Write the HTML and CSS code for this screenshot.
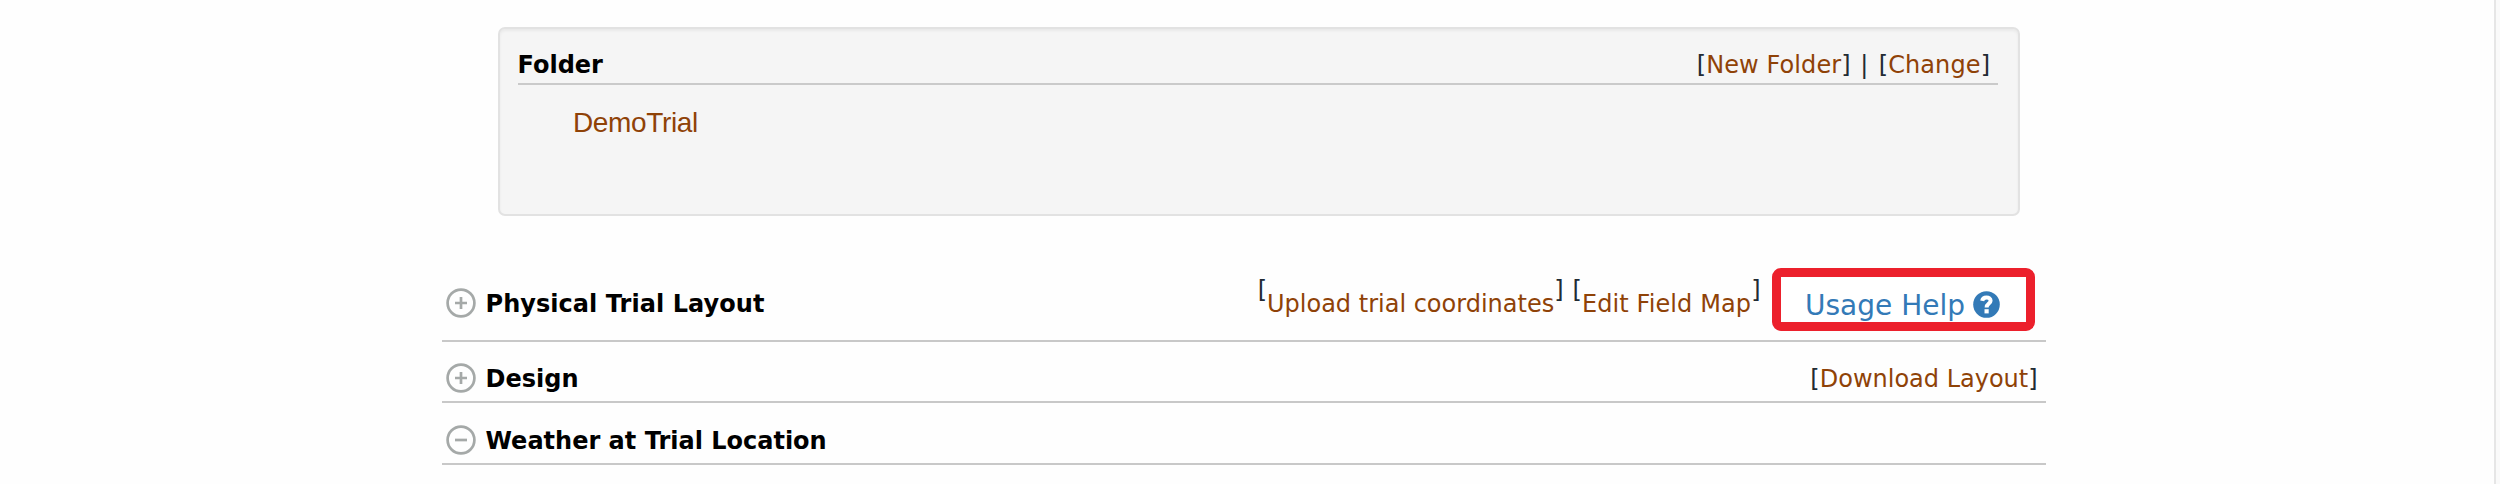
FILE: index.html
```
<!DOCTYPE html>
<html lang="en">
<head>
<meta charset="utf-8">
<title>DemoTrial</title>
<link rel="stylesheet" href="styles.css">
</head>
<body>
<main class="page">
  <section class="folder">
    <header class="folder-head">
      <h2 class="title">Folder</h2>
      <div class="folder-actions"><span class="action">[<a>New Folder</a>]</span><span>|</span><span class="action">[<a>Change</a>]</span></div>
    </header>
    <a class="folder-name">DemoTrial</a>
  </section>

  <section class="row row-layout">
    <svg class="toggle" viewBox="0 0 30 30"><circle cx="15" cy="15" r="13.4"/><path d="M9 15h12M15 9v12"/></svg>
    <h2 class="title title-wide">Physical Trial Layout</h2>
    <div class="layout-actions">
      <span class="raised"><sup>[</sup><a>Upload trial coordinates</a><sup>]</sup></span>
      <span class="raised raised-wide"><sup>[</sup><a>Edit Field Map</a><sup>]</sup></span>
    </div>
    <div class="help">
      <span>Usage Help</span>
      <svg class="help-icon" viewBox="0 0 27 27"><circle cx="13.5" cy="13.5" r="13.3"/><path class="mark" d="M9.2 9.8C9.6 7.5 11.2 6.6 13.5 6.6c2.4 0 4.1 1.2 4.1 3.1 0 2.9-4 2.7-4 6.7"/><path class="dot" d="M11.5 18.2h4.2v4.2h-4.2z"/></svg>
    </div>
  </section>

  <section class="row row-design">
    <svg class="toggle" viewBox="0 0 30 30"><circle cx="15" cy="15" r="13.4"/><path d="M9 15h12M15 9v12"/></svg>
    <h2 class="title">Design</h2>
    <div class="download">[<a>Download Layout</a>]</div>
  </section>

  <section class="row row-weather">
    <svg class="toggle" viewBox="0 0 30 30"><circle cx="15" cy="15" r="13.4"/><path d="M9 15h12"/></svg>
    <h2 class="title">Weather at Trial Location</h2>
  </section>
</main>
<aside class="edge"></aside>
</body>
</html>
```
FILE: styles.css
```
* { box-sizing: border-box; }
body {
  margin: 0;
  height: 484px;
  overflow: hidden;
  display: flex;
  background: #fefefe;
  color: #222b33;
  font: 24px/30px Verdana, "DejaVu Sans", sans-serif;
}
a { color: #8f4207; }
.page { flex: 1; padding: 27px 448px 0 442px; }
.edge { width: 6px; border-left: 2px solid #e6e6e6; background: #fafafa; }
.title { margin: 0; font-size: 24px; font-weight: bold; line-height: 30px; color: #000; white-space: nowrap; }
.title-wide { letter-spacing: 0.05px; }

.folder {
  height: 189px;
  margin: 0 26px 0 56px;
  padding: 21px 20px 0 17.5px;
  border: 2px solid #e2e2e2;
  border-radius: 7px;
  background: #f5f5f5;
  box-shadow: inset 0 2px 3px rgba(0, 0, 0, 0.05);
}
.folder-head { display: flex; justify-content: space-between; height: 35px; border-bottom: 2px solid #cacaca; }
.folder-actions { display: flex; padding-right: 8px; }
.folder-actions > span:nth-child(2) { margin: 0 10.5px 0 9.5px; }
.action a { letter-spacing: 0.1px; }
.folder-name {
  display: block;
  margin: 21px 0 0 55.5px;
  font: 28px/34px "Liberation Sans", Arial, sans-serif;
  letter-spacing: -0.35px;
}

.row { display: flex; align-items: flex-start; width: 1604px; border-bottom: 2px solid #c8c8c8; }
.row-layout { height: 126px; padding-top: 72px; }
.row-design { height: 61px; padding-top: 22px; }
.row-weather { height: 62px; padding-top: 23px; }
.toggle { flex: none; width: 30px; height: 30px; margin: -1px 10px 0 3.5px; fill: none; stroke: #a5a9a8; stroke-width: 2.7; }
.row-layout .title, .layout-actions { margin-top: 1px; }
.row-layout .toggle { margin-top: 0; }

.layout-actions { display: flex; gap: 9px; margin-left: auto; white-space: nowrap; }
.raised sup { position: relative; top: -14px; font-size: 24px; line-height: 0; vertical-align: baseline; }
.raised-wide a { letter-spacing: 0.1px; }
.help {
  display: flex;
  width: 263px;
  height: 63px;
  margin: -20px 11px -20px 11.5px;
  padding-left: 24px;
  border: 9px solid #ec202c;
  border-radius: 9px;
  background: #fff;
  color: #337ab7;
  font-size: 28px;
  line-height: 34px;
  white-space: nowrap;
}
.help span { margin-top: 12px; }
.help-icon { flex: none; width: 27px; height: 27px; margin: 13.5px 0 0 8.5px; fill: #337ab7; }
.help-icon .mark { fill: none; stroke: #fff; stroke-width: 4; }
.help-icon .dot { fill: #fff; }
.download { margin-left: auto; padding-right: 8.4px; }
```
